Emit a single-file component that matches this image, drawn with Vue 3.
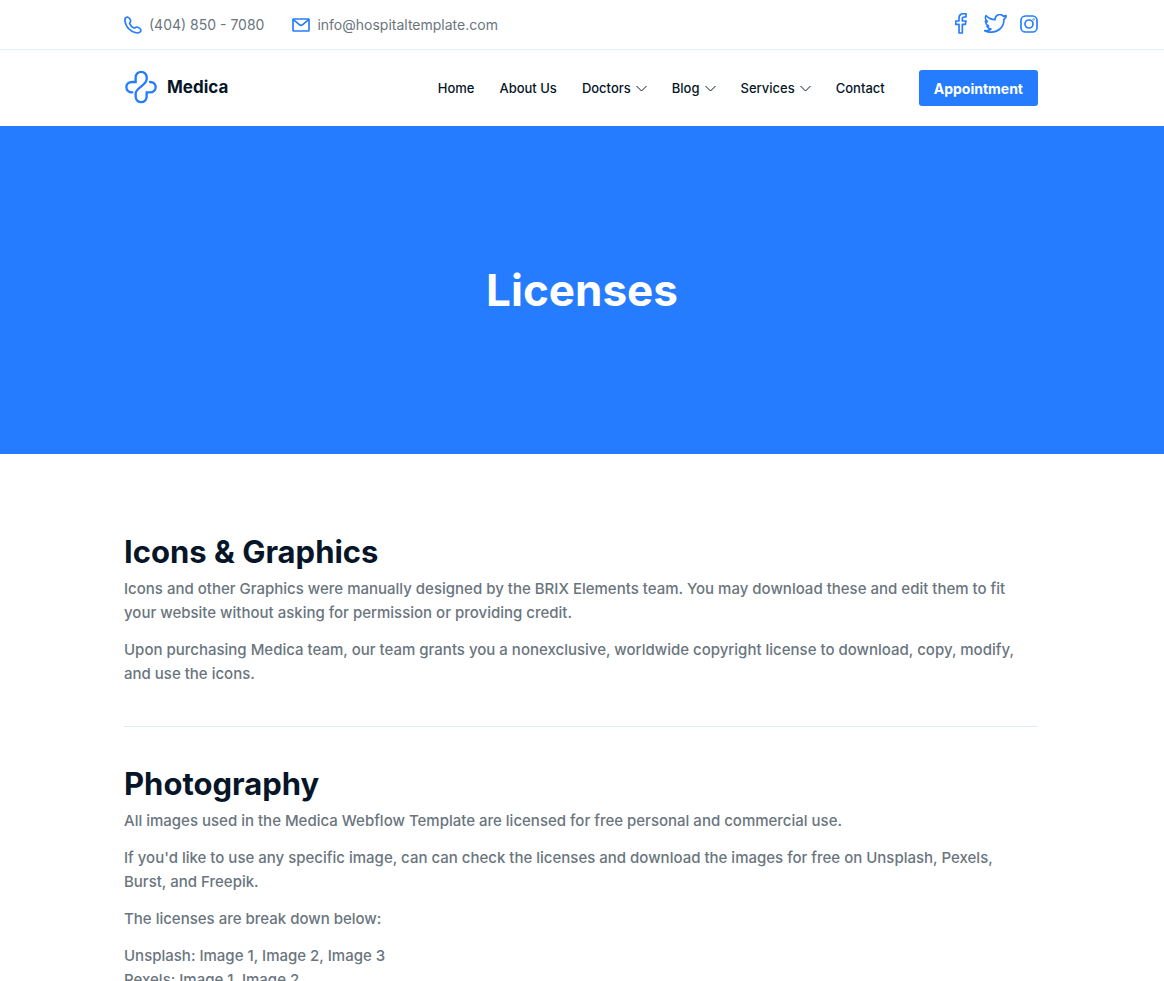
<script setup>
const links = [
  { label: 'Home' },
  { label: 'About Us' },
  { label: 'Doctors', menu: true },
  { label: 'Blog', menu: true },
  { label: 'Services', menu: true },
  { label: 'Contact' },
]
</script>

<template>
  <div class="page">
    <div class="topbar">
      <div class="container topbar-row">
        <a class="contact" href="#phone">
          <svg width="18" height="18" viewBox="0 0 54 54" class="line">
            <path d="M10 3C5 4 2 9 3 15C4 32 22 50 40 51C46 51 51 47 51 43C51 39 42 33 38 33C35 33 33 37 30 36C25 34 19 28 17 23C16 20 20 18 20 15C20 11 14 3 10 3Z" />
          </svg>
          <span>(404) 850 - 7080</span>
        </a>
        <a class="contact" href="#email">
          <svg width="18" height="14" viewBox="0 0 54 42" class="line">
            <rect x="3" y="3" width="48" height="36" rx="2" />
            <path d="M4 5L22 20Q27 24 32 20L50 5" />
          </svg>
          <span>info@hospitaltemplate.com</span>
        </a>
        <div class="social">
          <a href="#facebook" aria-label="Facebook">
            <svg width="12" height="21" viewBox="45 41 36 63" class="line">
              <path d="M78 43H71C61 43 57 49 57 57V65H47V75H57V101H67V75H76L78 65H67V58C67 54 69 53 72 53H78Z" />
            </svg>
          </a>
          <a href="#twitter" aria-label="Twitter">
            <svg width="23" height="19" viewBox="135 43 69 57" class="line">
              <path d="M201 48L193 50C189 45 182 43 176 46C170 49 168 54 168 60C157 60 148 55 141 48C138 52 139 60 145 66L139 64C140 71 143 76 149 79L144 80C146 84 150 87 156 88C151 92 144 94 137 93C158 103 195 96 195 59L201 52Z" />
            </svg>
          </a>
          <a href="#instagram" aria-label="Instagram">
            <svg width="18" height="18" viewBox="240 45 54 54" class="line">
              <rect x="243" y="48" width="48" height="48" rx="13" />
              <circle cx="267" cy="72" r="12" />
              <circle cx="281" cy="58" r="1" />
            </svg>
          </a>
        </div>
      </div>
    </div>

    <header class="header">
      <div class="container header-row">
        <a class="brand" href="#home">
          <svg width="34" height="34" viewBox="0 0 102 102" class="mark">
            <path d="M25 67C14 67 7 60 7 51C7 42 14 36 24 36H35V22A16 16 0 0 1 68 22V28C68 45 35 54 35 70V80A16 16 0 0 0 68 80V67H78C88 67 95 60 95 51C95 42 88 36 78 36" />
          </svg>
          <span>Medica</span>
        </a>
        <nav class="nav">
          <a v-for="link in links" :key="link.label" href="#nav">
            {{ link.label }}
            <svg v-if="link.menu" width="11" height="7" viewBox="0 0 11 7"><path d="M0.5 1L5.500 6L10.500 1" /></svg>
          </a>
        </nav>
        <button class="cta" type="button">Appointment</button>
      </div>
    </header>

    <section class="hero">
      <h1>Licenses</h1>
    </section>

    <main class="container content">
      <section>
        <h2>Icons &amp; Graphics</h2>
        <p>Icons and other Graphics were manually designed by the BRIX Elements team. You may download these and edit them to fit your website without asking for permission or providing credit.</p>
        <p>Upon purchasing Medica team, our team grants you a nonexclusive, worldwide copyright license to download, copy, modify, and use the icons.</p>
      </section>
      <hr>
      <section>
        <h2>Photography</h2>
        <p>All images used in the Medica Webflow Template are licensed for free personal and commercial use.</p>
        <p>If you'd like to use any specific image, can can check the licenses and download the images for free on Unsplash, Pexels, Burst, and Freepik.</p>
        <p>The licenses are break down below:</p>
        <p>Unsplash: Image 1, Image 2, Image 3<br>Pexels: Image 1, Image 2</p>
      </section>
    </main>
  </div>
</template>

<style>
body {
  background: #fff;
}
</style>

<style scoped>
.page {
  font-family: Inter, "Liberation Sans", sans-serif;
  color: #6a757e;
}
.container {
  max-width: 1140px;
  margin: 0 126px 0 124px;
}
a {
  color: inherit;
  text-decoration: none;
}
.line {
  fill: none;
  stroke: #257cff;
  stroke-width: 5;
  stroke-linejoin: round;
  stroke-linecap: round;
}
.topbar {
  border-bottom: 1px solid #e6edf3;
}
.topbar-row {
  display: flex;
  align-items: center;
  gap: 28px;
  height: 49px;
  font-size: 14px;
}
.contact {
  display: flex;
  align-items: center;
  gap: 7px;
}
.social {
  display: flex;
  align-items: center;
  gap: 13px;
  margin-left: auto;
  padding-bottom: 2px;
}
.social a {
  display: flex;
}
.social a:first-child {
  margin-right: 4px;
}
.header-row {
  display: flex;
  align-items: center;
  height: 76px;
}
.brand {
  display: flex;
  align-items: center;
  gap: 9px;
  padding-bottom: 2px;
  color: #061628;
  font-size: 17px;
  font-weight: 700;
}
.mark {
  fill: none;
  stroke: #257cff;
  stroke-width: 7;
  stroke-linecap: round;
}
.nav {
  display: flex;
  gap: 25px;
  margin-left: auto;
  color: #061628;
  font-size: 13px;
  font-weight: 500;
}
.nav a {
  display: flex;
  align-items: center;
  gap: 5px;
}
.nav svg {
  fill: none;
  stroke: #061628;
}
.cta {
  height: 36px;
  margin-left: 34px;
  padding: 0 15px;
  border: 0;
  border-radius: 3px;
  background: #257cff;
  color: #fff;
  font: inherit;
  font-size: 14px;
  font-weight: 700;
}
.hero {
  display: grid;
  place-items: center;
  height: 328px;
  background: #257cff;
}
h1 {
  margin: 0;
  color: #fff;
  font-size: 44px;
  line-height: 56px;
  font-weight: 700;
}
.content {
  padding: 80px 0;
}
h2 {
  margin: 0 0 7px;
  color: #061628;
  font-size: 31px;
  line-height: 36px;
  font-weight: 700;
}
p {
  margin: 0 0 13px;
  font-size: 15px;
  line-height: 24px;
  font-weight: 500;
}
hr {
  height: 1px;
  margin: 40px 0 39px;
  border: 0;
  background: #dfe9fa;
}
</style>
